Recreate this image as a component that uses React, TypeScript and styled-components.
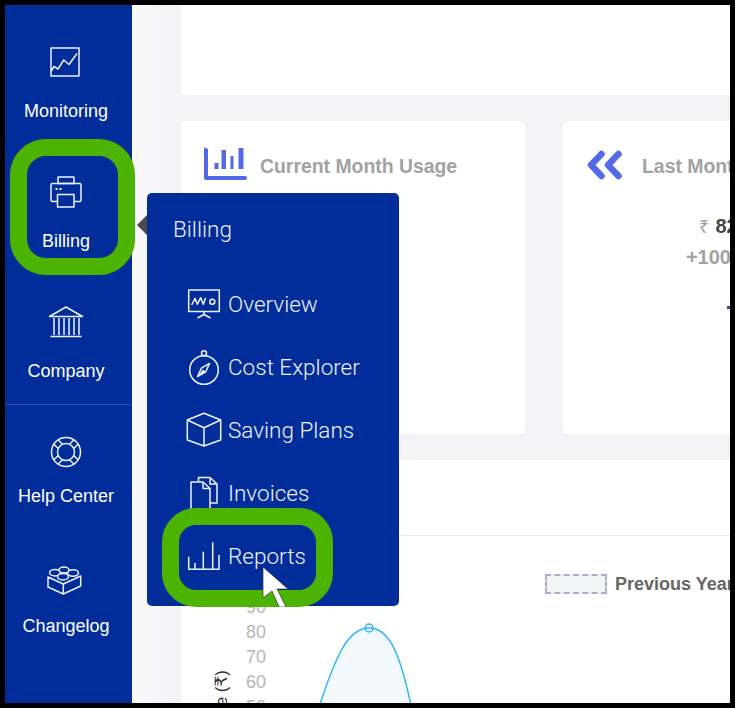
import React from "react";
import styled, { createGlobalStyle } from "styled-components";

const Global = createGlobalStyle`
  html, body { margin: 0; padding: 0; background: #000; overflow: hidden; }
  body { font-family: "Liberation Sans", Arial, sans-serif; }
`;

const Frame = styled.div`
  position: relative;
  display: flex;
  width: 735px;
  height: 708px;
  box-sizing: border-box;
  border: 5px solid #000;
  overflow: hidden;
`;

const Sidebar = styled.nav`
  display: flex;
  flex-direction: column;
  flex: none;
  width: 127px;
  background: #002d99;
`;

const NavItem = styled.div<{ $pad: number; $gap: number }>`
  display: flex;
  flex-direction: column;
  align-items: center;
  flex: none;
  height: 130px;
  box-sizing: border-box;
  padding: ${(p) => p.$pad}px 5px 0 0;
  gap: ${(p) => p.$gap}px;
  color: #fff;
  font-size: 18px;
  line-height: 22px;
`;

const NavDivider = styled.div`
  flex: none;
  height: 1px;
  margin-top: 9px;
  background: rgba(255, 255, 255, 0.17);
`;

const LineIcon = styled.svg`
  display: block;
  flex: none;
  width: 32px;
  height: 32px;
  overflow: visible;
  fill: none;
  stroke: #eef2ff;
  stroke-width: 1.5;
  stroke-linejoin: round;
`;

const Main = styled.main`
  flex: 1;
  min-width: 0;
  display: flex;
  flex-direction: column;
  padding-left: 49px;
  background: linear-gradient(90deg, #fafafc 0, #f3f3f6 45px);
  overflow: hidden;
`;

const TopCard = styled.section`
  flex: none;
  height: 90px;
  margin-bottom: 26px;
  background: #fff;
  border-radius: 0 0 0 5px;
`;

const CardRow = styled.div`
  flex: none;
  display: flex;
  gap: 38px;
  height: 313px;
  margin-bottom: 26px;
`;

const Card = styled.section`
  flex: none;
  width: 344px;
  box-sizing: border-box;
  padding: 26px 0 0 23px;
  background: #fff;
  border-radius: 5px;
`;

const CardHeader = styled.header`
  display: flex;
  align-items: flex-start;
  height: 33px;
`;

const IconSlot = styled.div`
  flex: none;
  width: 56px;
`;

const CardTitle = styled.h2`
  margin: 0;
  padding-top: 6px;
  font-size: 19.4px;
  line-height: 26px;
  font-weight: 700;
  color: #a2a2a2;
  white-space: nowrap;
`;

const CardBody = styled.div`
  display: flex;
  flex-direction: column;
  align-items: center;
  margin-left: -23px;
  padding-top: 33px;
`;

const Amount = styled.div`
  padding-left: 6px;
  font-size: 20px;
  line-height: 26px;
  font-weight: 700;
  color: #444;
  white-space: nowrap;
`;

const Rupee = styled.span`
  font-weight: 400;
  font-size: 18px;
  color: #9a9a9a;
  margin-right: 6px;
`;

const Change = styled.div`
  margin-top: 4px;
  padding-right: 2px;
  font-size: 20px;
  line-height: 26px;
  font-weight: 700;
  color: #a2a2a2;
  white-space: nowrap;
`;

const Bar = styled.div`
  width: 16px;
  height: 3px;
  margin-top: 36px;
  background: #2f45b4;
`;

const Panel = styled.section`
  flex: 1;
  min-height: 0;
  background: #fff;
  overflow: hidden;
`;

const PanelHeader = styled.div`
  height: 75px;
  border-bottom: 1px solid #e9e9ec;
`;

const Legend = styled.div`
  display: flex;
  align-items: center;
  gap: 8px;
  padding: 38px 0 0 364px;
  color: #666;
  font-size: 18px;
  line-height: 20px;
  font-weight: 700;
  white-space: nowrap;
`;

const Swatch = styled.span`
  flex: none;
  width: 62px;
  height: 20px;
  box-sizing: border-box;
  border: 2px dashed #a6b1c3;
  background: #f1f3f5;
`;

const Chart = styled.svg`
  display: block;
  width: 549px;
  height: 120px;
  margin-top: 6px;
`;

const Tick = styled.text`
  font-family: "Liberation Sans", Arial, sans-serif;
  font-size: 18px;
  fill: #b6b6b6;
  text-anchor: end;
`;

const AxisLabel = styled.text`
  font-family: "Liberation Sans", Arial, "DejaVu Sans", sans-serif;
  font-size: 17px;
  fill: #333;
  text-anchor: end;
`;

const Popup = styled.div`
  position: absolute;
  left: 142px;
  top: 188px;
  width: 252px;
  height: 413px;
  background: #002d99;
  border-radius: 5px;
  color: #eef1fd;
  font-family: Roboto, "Liberation Sans", sans-serif;
  font-weight: 300;

  &::before {
    content: "";
    position: absolute;
    left: -10px;
    top: 22px;
    border-style: solid;
    border-width: 10px 10px 10px 0;
    border-color: transparent #4a4a4a transparent transparent;
  }
`;

const PopupTitle = styled.div`
  height: 72px;
  margin-bottom: 7px;
  padding-left: 26px;
  font-size: 22.5px;
  line-height: 72px;
`;

const MenuRow = styled.div`
  display: flex;
  align-items: flex-start;
  gap: 8px;
  height: 63px;
  box-sizing: border-box;
  padding: 16px 0 0 41px;
  font-size: 22.5px;
  line-height: 32px;
  white-space: nowrap;
`;

const Ring = styled.div<{ $left: number; $top: number; $w: number; $h: number; $r: number }>`
  position: absolute;
  left: ${(p) => p.$left}px;
  top: ${(p) => p.$top}px;
  width: ${(p) => p.$w}px;
  height: ${(p) => p.$h}px;
  box-sizing: border-box;
  border: 17px solid #4cb300;
  border-radius: ${(p) => p.$r}px;
`;

const Cursor = styled.svg`
  position: absolute;
  left: 255px;
  top: 559px;
  width: 30px;
  height: 43px;
`;

const MonitoringIcon = () => (
  <LineIcon viewBox="0 0 32 32">
    <rect x="1" y="2" width="28" height="28" />
    <polyline points="1,25.5 4,20.5 8,23 13.7,14 19,18.5 27,7.5" />
  </LineIcon>
);

const BillingIcon = () => (
  <LineIcon viewBox="0 0 32 32">
    <rect x="8" y="1" width="16" height="6.5" />
    <rect x="1" y="7.5" width="30" height="18" rx="1.5" />
    <rect x="7.5" y="18.5" width="16.5" height="12.5" fill="#002d99" />
    <path d="M5.5 13h2M9.5 13h2" strokeWidth="2" />
  </LineIcon>
);

const CompanyIcon = () => (
  <LineIcon viewBox="0 0 32 32">
    <path d="M-.5 10.5 16 1l16.5 9.5z" />
    <path d="M4 12v17M9 12v17M14 12v17M19 12v17M24 12v17M29 12v17" />
    <path d="M.5 30.5h31" />
  </LineIcon>
);

const HelpIcon = () => (
  <LineIcon viewBox="0 0 32 32">
    <circle cx="16" cy="16" r="14.5" />
    <circle cx="16" cy="16" r="8.5" />
    {[45, 135, 225, 315].map((a) => (
      <path key={a} transform={`rotate(${a} 16 16)`} d="M13 8V2M19 8V2" />
    ))}
  </LineIcon>
);

const ChangelogIcon = () => (
  <LineIcon viewBox="0 0 32 32">
    <path d="M-2 11 13.3 18 30.7 10V20L13.3 28-2 21Z" />
    <path d="M13.3 18V28" />
    <ellipse cx="5" cy="6.7" rx="5.5" ry="3.2" fill="#002d99" />
    <ellipse cx="23" cy="7" rx="5.5" ry="3.2" fill="#002d99" />
    <ellipse cx="14" cy="4" rx="5" ry="3" fill="#002d99" />
    <ellipse cx="13" cy="10.7" rx="5.5" ry="3.2" fill="#002d99" />
  </LineIcon>
);

const OverviewIcon = () => (
  <LineIcon viewBox="0 0 32 32">
    <rect x=".7" y="2" width="30.6" height="21.5" />
    <polyline points="3.7,17 7,10.3 9.3,16.3 12.7,9.7 15.3,16.3 17.5,10" />
    <circle cx="24.3" cy="13.7" r="2.5" />
    <path d="M16 23.5v3M9.5 30l6.5-3.5 6.5 3.5" />
  </LineIcon>
);

const CompassIcon = () => (
  <LineIcon viewBox="0 0 32 32">
    <circle cx="16" cy="19" r="14.3" />
    <circle cx="16" cy="2.2" r="2.5" />
    <path d="M21.5 12.5 17.8 20.8 9.5 25.5 13.3 17.2Z" />
    <path d="M15 18.500 17.800 20.800 9.500 25.500Z" fill="#eef2ff" stroke="none" />
  </LineIcon>
);

const CubeIcon = () => (
  <LineIcon viewBox="0 0 32 32">
    <path d="M16-.7 32.7 6V26L16 32-.7 26V6Z" />
    <path d="M-.7 6 16 13.7 32.7 6M16 13.7V32" />
  </LineIcon>
);

const InvoicesIcon = () => (
  <LineIcon viewBox="0 0 32 32">
    <path d="M10.5 4.5V.5H22L29 7V26H22" />
    <path d="M22 .5V7H29" />
    <path d="M3 5H15L22 11.5V33H3Z" />
    <path d="M15 5V11.5H22" />
  </LineIcon>
);

const ReportsIcon = () => (
  <LineIcon viewBox="0 0 32 32">
    <path d="M.7 16.7V29.3H31V15M7 23V29.3M15.3 11.7V29.3M24.7 2.3V29.3" />
  </LineIcon>
);

const nav = [
  { label: "Monitoring", Icon: MonitoringIcon },
  { label: "Billing", Icon: BillingIcon },
  { label: "Company", Icon: CompanyIcon },
];
const nav2 = [
  { label: "Help Center", Icon: HelpIcon },
  { label: "Changelog", Icon: ChangelogIcon },
];
const menu = [
  { label: "Overview", Icon: OverviewIcon },
  { label: "Cost Explorer", Icon: CompassIcon },
  { label: "Saving Plans", Icon: CubeIcon },
  { label: "Invoices", Icon: InvoicesIcon },
  { label: "Reports", Icon: ReportsIcon },
];

export default function App() {
  return (
    <Frame>
      <Global />
      <Sidebar>
        {nav.map(({ label, Icon }) => (
          <NavItem key={label} $pad={41} $gap={22}>
            <Icon />
            {label}
          </NavItem>
        ))}
        <NavDivider />
        {nav2.map(({ label, Icon }) => (
          <NavItem key={label} $pad={31} $gap={17}>
            <Icon />
            {label}
          </NavItem>
        ))}
      </Sidebar>
      <Main>
        <TopCard />
        <CardRow>
          <Card>
            <CardHeader>
              <IconSlot>
                <svg width="44" height="33" viewBox="0 0 44 33" fill="#5469e6" style={{ display: "block" }}>
                  <path d="M0 2a1.500 1.500 0 0 1 3 0h1v27h37a2 2 0 0 1 0 4H2a2 2 0 0 1-2-2Z" />
                  <rect x="10.500" y="16" width="4" height="6" />
                  <rect x="17.500" y="3" width="4.500" height="19" />
                  <rect x="26.500" y="9" width="3" height="13" />
                  <rect x="34.500" y="1" width="5" height="21" />
                </svg>
              </IconSlot>
              <CardTitle>Current Month Usage</CardTitle>
            </CardHeader>
          </Card>
          <Card>
            <CardHeader>
              <IconSlot>
                <svg width="37" height="30" viewBox="0 0 37 30" fill="none" stroke="#5469e6" strokeWidth="6.500" strokeLinejoin="round" strokeLinecap="round" style={{ display: "block", margin: "3px 0 0 1px" }}>
                  <path d="M14.500 4 4 15l10.500 11M31.500 4 21 15l10.500 11" />
                </svg>
              </IconSlot>
              <CardTitle>Last Month Usage</CardTitle>
            </CardHeader>
            <CardBody>
              <Amount>
                <Rupee>₹</Rupee>82,450
              </Amount>
              <Change>+100.00 %</Change>
              <Bar />
            </CardBody>
          </Card>
        </CardRow>
        <Panel>
          <PanelHeader />
          <Legend>
            <Swatch />
            Previous Year
          </Legend>
          <Chart viewBox="0 0 549 120">
            <Tick x="85" y="12.500">90</Tick>
            <Tick x="85" y="37.500">80</Tick>
            <Tick x="85" y="62.500">70</Tick>
            <Tick x="85" y="87.500">60</Tick>
            <Tick x="85" y="112.500">50</Tick>
            <AxisLabel x="46" y="70" transform="rotate(-90 46 70)">Usage (₹)</AxisLabel>
            <path d="M131 130C155 50 168 28 188 28S220 50 235 130Z" fill="#f2faff" stroke="#2db4ff" strokeWidth="1.500" />
            <circle cx="188" cy="28" r="4" fill="none" stroke="#2db4ff" strokeWidth="1.500" />
          </Chart>
        </Panel>
      </Main>
      <Popup>
        <PopupTitle>Billing</PopupTitle>
        {menu.map(({ label, Icon }) => (
          <MenuRow key={label}>
            <Icon />
            {label}
          </MenuRow>
        ))}
      </Popup>
      <Ring $left={5} $top={134} $w={125} $h={136} $r={36} />
      <Ring $left={157} $top={503} $w={171} $h={99} $r={34} />
      <Cursor viewBox="0 0 30 43">
        <path d="M3 3V34L12 27 19 43H26L17 25H28Z" fill="#fff" stroke="#333" strokeWidth=".7" />
      </Cursor>
    </Frame>
  );
}
